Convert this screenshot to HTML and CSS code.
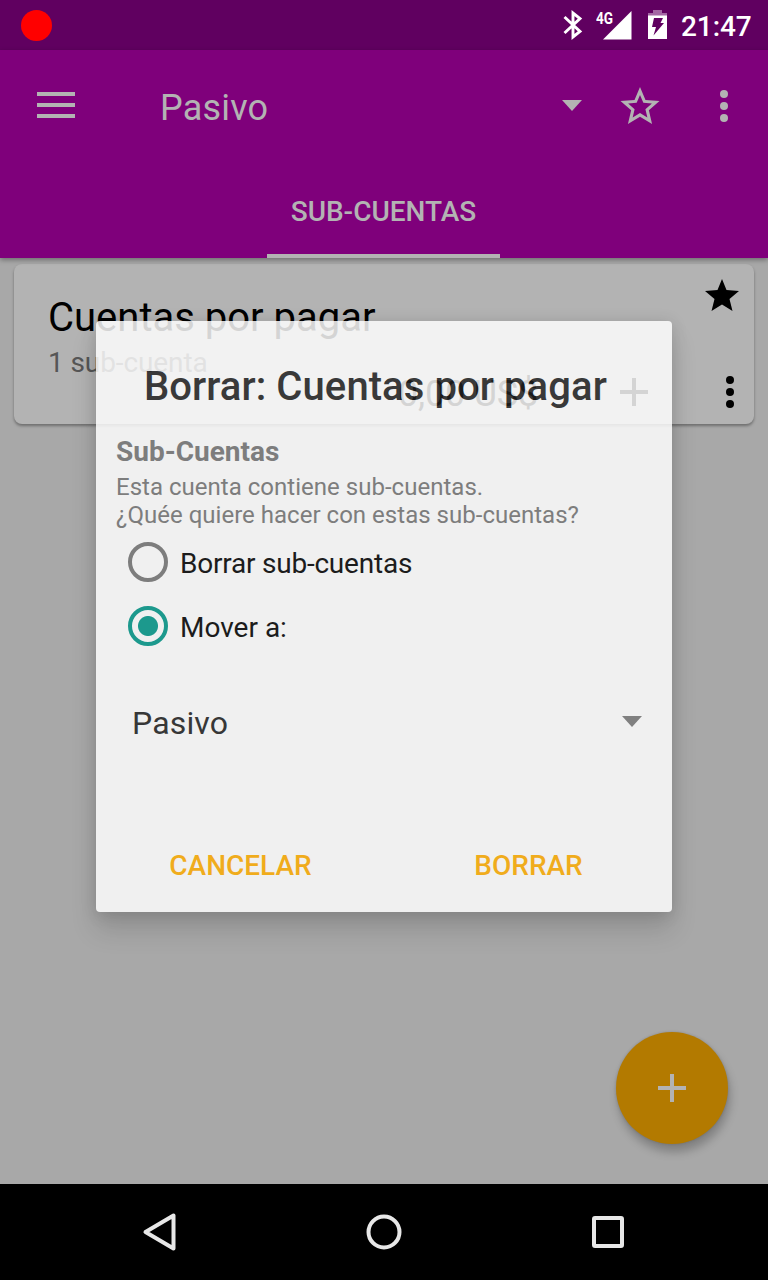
FILE: index.html
```html
<!DOCTYPE html>
<html lang="es">
<head>
<meta charset="utf-8">
<title>Pasivo</title>
<link rel="stylesheet" href="styles.css">
</head>
<body>
<div class="screen">
  <header class="status">
    <span class="record"></span>
    <div class="status-icons">
      <svg class="bluetooth" width="20" height="30" viewBox="0 0 20 30"><path d="M1.500 7 L17 21.500 L10 27 L10 3 L17 8.500 L1.500 23" fill="none" stroke="#fff" stroke-width="2.900"/></svg>
      <div class="signal">
        <span class="signal-label">4G</span>
        <svg width="29" height="29" viewBox="0 0 29 29"><path d="M28.500 0V28.500H0Z" fill="#fff"/></svg>
      </div>
      <svg class="battery" width="20" height="30" viewBox="0 0 20 30"><path d="M5 0h9v3h5v3H0V3h5z" fill="#a366a3"/><path d="M0 5.500h19V29H0z" fill="#fff"/><path d="M6 8h9l-2.500 5H16L5.500 25.500 8 17H4z" fill="#600060"/></svg>
      <span class="clock">21:47</span>
    </div>
  </header>
  <div class="appbar">
    <div class="toolbar">
      <svg class="menu" width="38" height="26" viewBox="0 0 38 26"><path d="M0 2h38M0 13h38M0 24h38" stroke="#b3b3b3" stroke-width="4"/></svg>
      <h1 class="toolbar-title">Pasivo</h1>
      <svg class="toolbar-caret" width="20" height="11" viewBox="0 0 20 11"><path d="M0 0h20L10 11z" fill="#b3b3b3"/></svg>
      <svg class="star" width="40" height="40" viewBox="1.750 1.500 20.500 20.500"><path d="M22 9.240l-7.190-.62L12 2 9.190 8.630 2 9.240l5.460 4.730L5.820 21 12 17.270 18.180 21l-1.630-7.030L22 9.240zM12 15.400l-3.760 2.270 1-4.280-3.320-2.880 4.380-.38L12 6.100l1.710 4.040 4.380.38-3.320 2.880 1 4.280L12 15.400z" fill="#b3b3b3"/></svg>
      <svg width="8" height="32" viewBox="0 0 8 32"><g fill="#b3b3b3"><circle cx="4" cy="4" r="4"/><circle cx="4" cy="16" r="4"/><circle cx="4" cy="28" r="4"/></g></svg>
    </div>
    <nav class="tabs"><span class="tab">SUB-CUENTAS</span></nav>
  </div>
  <main class="content">
    <article class="card">
      <div class="card-text">
        <h2 class="card-title">Cuentas por pagar</h2>
        <p class="card-sub">1 sub-cuenta</p>
      </div>
      <span class="amount">0,00 US$</span>
      <svg class="card-add" width="28" height="28" viewBox="0 0 28 28"><path d="M0 14h28M14 0v28" stroke="#000" stroke-width="4"/></svg>
      <div class="card-actions">
        <svg width="34" height="32" viewBox="0 0 34 32"><path d="M17 0L21.500 11 34 12 24.500 20 27.500 32 17 25.500 6.500 32 9.500 20 0 12 12.500 11z" fill="#000"/></svg>
        <svg class="card-more" width="8" height="32" viewBox="0 0 8 32"><circle cx="4" cy="4" r="4"/><circle cx="4" cy="16" r="4"/><circle cx="4" cy="28" r="4"/></svg>
      </div>
    </article>
    <button class="fab"><svg width="28" height="28" viewBox="0 0 28 28"><path d="M0 14h28M14 0v28" stroke="#b3b3b3" stroke-width="4"/></svg></button>
  </main>
  <footer class="navbar">
    <svg width="40" height="40" viewBox="0 0 40 40"><path d="M33.500 3.500V36.500L5.500 20Z"/></svg>
    <svg width="40" height="40" viewBox="0 0 40 40"><circle cx="20" cy="20" r="15.500"/></svg>
    <svg width="40" height="40" viewBox="0 0 40 40"><rect x="6" y="6" width="28" height="28" rx="1"/></svg>
  </footer>
  <section class="dialog">
    <h2 class="dialog-title">Borrar: Cuentas por pagar</h2>
    <h3 class="dialog-heading">Sub-Cuentas</h3>
    <p class="dialog-text">Esta cuenta contiene sub-cuentas.<br>¿Quée quiere hacer con estas sub-cuentas?</p>
    <div class="option"><span class="radio"></span><span class="option-label option-label-long">Borrar sub-cuentas</span></div>
    <div class="option"><span class="radio radio-on"></span><span class="option-label">Mover a:</span></div>
    <div class="select"><span class="select-value">Pasivo</span><svg width="20" height="11" viewBox="0 0 20 11"><path d="M0 0h20L10 11z" fill="#787878"/></svg></div>
    <div class="actions"><span class="action">CANCELAR</span><span class="action">BORRAR</span></div>
  </section>
</div>
</body>
</html>
```

FILE: styles.css
```css
* { box-sizing: border-box; }
body, h1, h2, h3, p { margin: 0; }
body { font-family: Roboto, sans-serif; background: #a8a8a8; }
svg { display: block; flex: none; }

.screen {
  position: relative;
  display: flex;
  flex-direction: column;
  width: 768px;
  height: 1280px;
  overflow: hidden;
  background: #a8a8a8;
}

.status {
  display: flex;
  align-items: center;
  justify-content: space-between;
  height: 50px;
  padding: 0 17px 0 20.500px;
  background: #600060;
}
.record { width: 31px; height: 31px; border-radius: 50%; background: #f00; }
.status-icons { display: flex; align-items: center; color: #fff; }
.bluetooth { margin-right: 12px; }
.signal { position: relative; padding-left: 8px; margin-right: 16px; }
.signal-label {
  position: absolute;
  left: 1px;
  top: -2px;
  font-size: 17px;
  font-weight: 700;
  line-height: 18px;
  transform: scaleX(.8);
  transform-origin: left;
}
.battery { margin-right: 13px; }
.clock { width: 70px; font-size: 28px; font-weight: 500; line-height: 32px; padding-top: 3px; letter-spacing: -.1px; white-space: nowrap; }

.appbar {
  position: relative;
  z-index: 1;
  height: 208px;
  background: #7f007b;
  box-shadow: 0 2px 5px rgba(0, 0, 0, .35);
}
.toolbar { display: flex; align-items: center; height: 112px; padding: 0 40px 0 37px; }
.menu { margin-top: -2px; }
.toolbar-title { flex: 1; padding: 3px 0 0 85px; font-size: 36px; font-weight: 400; line-height: 42px; letter-spacing: .2px; color: #b3b3b3; }
.toolbar-caret { margin: -2px 38px 0 0; }
.star { margin-right: 60px; }
.tabs { display: flex; justify-content: center; height: 96px; padding-right: 1px; }
.tab {
  width: 233px;
  padding-top: 1px;
  border-bottom: 4px solid #b3b3b3;
  font-size: 28px;
  font-weight: 500;
  line-height: 98px;
  height: 96px;
  text-align: center;
  color: #b3b3b3;
}

.content {
  display: flex;
  flex: 1;
  flex-direction: column;
  align-items: flex-end;
  justify-content: space-between;
  padding: 6px 14px 40px;
}
.card {
  display: flex;
  width: 740px;
  height: 160px;
  padding: 15px 15px 16px 34px;
  border-radius: 8px;
  background: #b3b3b3;
  box-shadow: 0 2px 3px rgba(0, 0, 0, .35);
}
.card-text { width: 350px; padding-top: 15px; }
.card-title { font-size: 40px; font-weight: 400; line-height: 47px; white-space: nowrap; }
.card-sub { margin-top: 5px; font-size: 28px; line-height: 33px; letter-spacing: -.1px; color: #565656; }
.amount { align-self: flex-end; width: 222px; font-size: 36px; line-height: 28px; letter-spacing: -.2px; color: #000; }
.card-add { align-self: flex-end; margin-bottom: 2px; }
.card-actions { display: flex; flex-direction: column; justify-content: space-between; margin-left: auto; }
.card-more { margin-left: 21px; }
.fab {
  display: grid;
  place-items: center;
  width: 112px;
  height: 112px;
  margin-right: 26px;
  padding: 0;
  border: 0;
  border-radius: 50%;
  background: #b37a00;
  box-shadow: 2px 8px 10px rgba(0, 0, 0, .24), 0 0 3px rgba(0, 0, 0, .16);
}

.navbar {
  display: flex;
  justify-content: center;
  gap: 184px;
  height: 96px;
  padding-top: 28px;
  background: #000;
}
.navbar svg { fill: none; stroke: #e8e8e8; stroke-width: 4; stroke-linejoin: round; }

/* Translucent modal floating over the list */
.dialog {
  position: absolute;
  z-index: 2;
  left: 96px;
  top: 321px;
  width: 576px;
  height: 591px;
  padding-top: 42px;
  border-radius: 4px;
  background: #fff;
  box-shadow: 0 18px 26px rgba(0, 0, 0, .16), 0 2px 16px rgba(0, 0, 0, .16);
  opacity: .833;
}
.dialog-title { padding-left: 48px; font-size: 40px; font-weight: 500; line-height: 48px; letter-spacing: .08px; color: #212121; white-space: nowrap; }
.dialog-heading { margin-top: 25px; padding-left: 20px; font-size: 28px; font-weight: 700; line-height: 32px; color: #757575; }
.dialog-text { margin-top: 5px; padding-left: 20px; font-size: 24px; line-height: 28px; letter-spacing: .02px; color: #757575; }
.option { display: flex; align-items: center; height: 64px; padding-left: 32px; }
.dialog-text + .option { margin-top: 1px; }
.radio { width: 40px; height: 40px; border: 4px solid #757575; border-radius: 50%; }
.radio-on { border-color: #009688; background: radial-gradient(circle, #009688 9.500px, transparent 10.500px); }
.option-label { padding: 3px 0 0 12px; font-size: 28px; color: #000; }
.option-label-long { letter-spacing: -.22px; }
.select { display: flex; align-items: center; justify-content: space-between; height: 64px; margin-top: 31px; padding: 0 30px 0 36px; }
.select-value { padding-top: 3px; font-size: 32px; letter-spacing: .15px; color: #212121; }
.actions { display: grid; grid-template-columns: 1fr 1fr; height: 94px; margin-top: 66px; }
.action { font-size: 28px; font-weight: 500; line-height: 94px; padding-left: 1px; text-align: center; color: #ffae00; }
```
